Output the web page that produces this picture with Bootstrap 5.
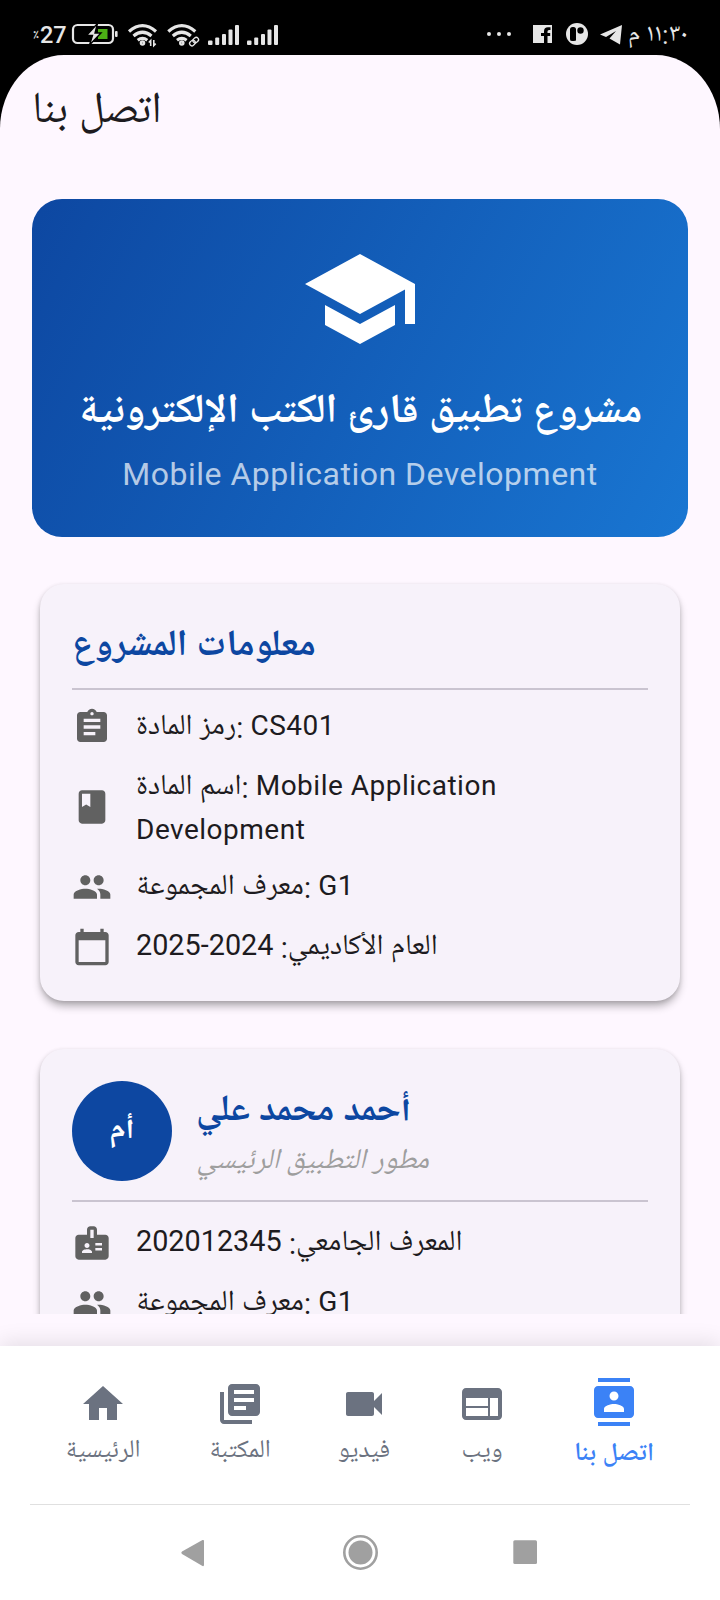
<!DOCTYPE html>
<html lang="ar" dir="ltr">
<head>
<meta charset="utf-8">
<meta name="viewport" content="width=device-width, initial-scale=1">
<title>اتصل بنا</title>
<link href="https://cdn.jsdelivr.net/npm/bootstrap@5.3.0/dist/css/bootstrap.min.css" rel="stylesheet">
<style>
  body { background: #000; font-family: Roboto, "Noto Naskh Arabic UI", sans-serif; color: #1d1b20; width: 720px; height: 1600px; overflow: hidden; }
  svg { display: block; flex: none; }
  .status { height: 55px; color: #e6e6e6; padding: 14px 32px 0 33px; }
  .status .pct { font-size: 15px; line-height: 42px; width: 7px; }
  .status .lvl { font-size: 23.500px; line-height: 42px; font-weight: 500; width: 27px; }
  .status .clock { font-size: 25px; line-height: 43px; height: 40px; }
  .screen { height: 1545px; background: #fef7ff; border-radius: 64px 64px 0 0 / 74px 74px 0 0; }
  .topbar { height: 112px; padding: 30px 32px 0; }
  .topbar h1 { font-size: 44px; line-height: 56px; font-weight: 400; }
  .content { height: 1147px; padding: 32px 32px 0; overflow: hidden; }
  .hero { height: 338px; border-radius: 30px; color: #fff; background: linear-gradient(117.3deg, #0d47a1, #1976d2); padding-top: 40px; }
  .hero h2 { font-size: 41.200px; line-height: 64px; font-weight: 700; margin: 23px 0 0; }
  .hero p { font-size: 32px; line-height: 48px; letter-spacing: .5px; color: rgba(255,255,255,.7); margin: 4px 0 0; }
  .panel { margin: 47px 8px 0; padding: 32px 32px 24px; background: #f7f2fa; border-radius: 24px; box-shadow: 0 6px 9px -1px rgba(0,0,0,.3), 0 1px 4px rgba(0,0,0,.12); }
  .panel + .panel { margin-top: 48px; }
  .panel h3 { font-size: 37.100px; line-height: 48px; font-weight: 700; color: #0d47a1; margin: 0; padding-top: 8px; }
  .rule { height: 2px; background: #cac4d0; }
  .info { padding: 8px 0; font-size: 28px; line-height: 44px; letter-spacing: .5px; gap: 24px; }
  .info svg { fill: #616161; }
  .info .txt { margin: -1px 0 1px; }
  .info .two { margin-bottom: -3px; }
  .ar { font-size: 29.200px; line-height: 1; vertical-align: -3px; }
  .num { font-size: 28.800px; line-height: 1; }
  .avatar { width: 100px; height: 100px; background: #0d47a1; color: #fff; font-size: 32px; line-height: 48px; font-weight: 700; }
  .role { font-size: 29px; line-height: 44px; font-style: italic; color: #9e9e9e; margin: 3px 0 -3px; }
  .tabs { height: 254px; margin-top: 32px; background: #fff; box-shadow: 0 -4px 20px rgba(0,0,0,.1); position: relative; }
  .tabrow { height: 158px; padding: 32px 40px 0; }
  .tab { color: #6b7280; font-size: 25.200px; line-height: 36px; white-space: nowrap; width: 0; padding-top: 2px; gap: 6px; }
  .tab svg { fill: currentColor; }
  .tab.active { color: #3b82f6; font-size: 26px; font-weight: 600; padding-top: 0; gap: 11px; }
  .syskeys { height: 96px; margin: 0 30px; border-top: 1px solid #e0e0e0; }
</style>
</head>
<body>
<header class="status d-flex align-items-start justify-content-between">
  <div class="d-flex">
    <span class="pct">٪</span><span class="lvl">27</span>
    <svg width="230" height="30" viewBox="67 20 230 30" style="margin-top:6px">
      <rect x="73" y="25" width="40" height="18" rx="4.500" fill="none" stroke="#e6e6e6" stroke-width="2.200"/>
      <rect x="115" y="31" width="2.600" height="6" rx="1" fill="#e6e6e6"/>
      <path d="M98 29h9.500v10H98z" fill="#4caf15"/>
      <path d="M97.500 23.500 86.500 35.500h6l-3 9.500 11.500-12h-6z" fill="#e6e6e6" stroke="#000" stroke-width="1.400"/>
      <g fill="none" stroke="#e6e6e6" stroke-width="3.200">
        <g id="wifi"><path d="M129 31.500q13.500-11.800 27 0M133.500 36q9-7.500 18 0M137.700 40.200q4.800-3.600 9.600 0"/><circle cx="142.500" cy="43" r="1.200"/></g>
        <use href="#wifi" x="39.300"/>
      </g>
      <path d="M150.500 46v-5M148.800 42.200l1.700-1.700M154 40v5.500l1.700-1.700" stroke="#000" stroke-width="4"/>
      <path d="M150.700 46v-5.500l-1.900 2M153.800 40v5.600l1.900-2" fill="none" stroke="#e6e6e6" stroke-width="1.600"/>
      <g fill="none" stroke-linecap="round"><path d="M190.500 44.500l7-6" stroke="#000" stroke-width="8"/>
      <g stroke="#e6e6e6" stroke-width="1.300" transform="rotate(-42 194 41.500)"><rect x="188.800" y="39.300" width="6" height="4.600" rx="2.300"/><rect x="193.200" y="39.300" width="6" height="4.600" rx="2.300"/></g></g>
      <g id="bars" fill="#e6e6e6"><rect x="208" y="40.500" width="4.500" height="4.500" rx="1"/><rect x="215.200" y="37.500" width="4" height="7.500" rx="1"/><rect x="222" y="34" width="4" height="11" rx="1"/><rect x="228.500" y="29.500" width="4" height="15.500" rx="1"/><rect x="235" y="25" width="4" height="20" rx="1"/></g>
      <use href="#bars" x="39"/>
    </svg>
  </div>
  <div class="d-flex">
    <svg width="142" height="30" viewBox="482 20 142 30" fill="#e6e6e6" style="margin-top:6px">
      <circle cx="489" cy="34" r="2"/><circle cx="499" cy="34" r="2"/><circle cx="509" cy="34" r="2"/>
      <path fill-rule="evenodd" d="M533 25h19v18h-4.500v-7h2.700v-3H547.500v-1.500q0-1.500 1.500-1.500h1.500v-2.800h-2.500q-4 0-4 4V33h-3v3h3v7H533z"/>
      <circle cx="577" cy="34" r="11"/><path d="M570.500 29.500q3-2 5.500 0v11h-5.500z" fill="#000"/><rect x="570" y="27" width="6" height="14" rx="2.500" fill="#000"/><circle cx="580.500" cy="30.500" r="3.200" fill="#000"/>
      <path d="M600 34.500 622 25l-2 19.500-10.500-6L616 31l-10 6z"/>
    </svg>
    <span class="clock ps-1">١١:٣٠ م</span>
  </div>
</header>

<div class="screen d-flex flex-column">
  <div class="topbar"><h1>اتصل بنا</h1></div>

  <main class="content">
    <section class="hero d-flex flex-column align-items-center text-center">
      <svg width="120" height="120" viewBox="0 0 24 24" fill="#fff"><path d="M5 13.180v4L12 21l7-3.820v-4L12 17l-7-3.820zM12 3 1 9l11 6 9-4.910V17h2V9L12 3z"/></svg>
      <h2>مشروع تطبيق قارئ الكتب الإلكترونية</h2>
      <p>Mobile Application Development</p>
    </section>

    <section class="panel">
      <h3>معلومات المشروع</h3>
      <div class="rule" style="margin:16px 0 7px"></div>
      <div class="info d-flex align-items-center">
        <svg width="40" height="40" viewBox="0 0 24 24"><path d="M19 3h-4.180C14.400 1.840 13.300 1 12 1s-2.400.84-2.820 2H5c-1.100 0-2 .9-2 2v14c0 1.100.9 2 2 2h14c1.100 0 2-.9 2-2V5c0-1.100-.9-2-2-2zm-7 0c.55 0 1 .45 1 1s-.45 1-1 1-1-.45-1-1 .45-1 1-1zm2 14H7v-2h7v2zm3-4H7v-2h10v2zm0-4H7V7h10v2z"/></svg>
        <div class="txt"><span class="ar">رمز المادة: </span>CS401</div>
      </div>
      <div class="info d-flex align-items-center">
        <svg width="40" height="40" viewBox="0 0 24 24"><path d="M18 2H6c-1.100 0-2 .9-2 2v16c0 1.100.9 2 2 2h12c1.100 0 2-.9 2-2V4c0-1.100-.9-2-2-2zM6 4h5v8l-2.500-1.500L6 12V4z"/></svg>
        <div class="txt two"><span class="ar">اسم المادة: </span>Mobile Application<br>Development</div>
      </div>
      <div class="info d-flex align-items-center">
        <svg width="40" height="40" viewBox="0 0 24 24"><path id="people" d="M16 11c1.660 0 2.990-1.340 2.990-3S17.660 5 16 5c-1.660 0-3 1.340-3 3s1.340 3 3 3zm-8 0c1.660 0 2.990-1.340 2.990-3S9.660 5 8 5C6.340 5 5 6.340 5 8s1.340 3 3 3zm0 2c-2.330 0-7 1.170-7 3.500V19h14v-2.500c0-2.330-4.670-3.500-7-3.500zm8 0c-.29 0-.62.020-.97.050 1.160.84 1.970 1.970 1.970 3.450V19h6v-2.500c0-2.330-4.670-3.500-7-3.500z"/></svg>
        <div class="txt"><span class="ar">معرف المجموعة: </span>G1</div>
      </div>
      <div class="info d-flex align-items-center">
        <svg width="40" height="40" viewBox="0 0 24 24"><path d="M20 3h-1V1h-2v2H7V1H5v2H4c-1.100 0-2 .9-2 2v16c0 1.100.9 2 2 2h16c1.100 0 2-.9 2-2V5c0-1.100-.9-2-2-2zm0 18H4V8h16v13z"/></svg>
        <div class="txt"><span class="ar">العام الأكاديمي: </span><span class="num">2024-2025</span></div>
      </div>
    </section>

    <section class="panel">
      <div class="d-flex align-items-center gap-4">
        <div class="avatar rounded-circle d-flex align-items-center justify-content-center">أم</div>
        <div><h3>أحمد محمد علي</h3><div class="role">مطور التطبيق الرئيسي</div></div>
      </div>
      <div class="rule" style="margin:19px 0 11px"></div>
      <div class="info d-flex align-items-center">
        <svg width="40" height="40" viewBox="0 0 24 24"><path fill-rule="evenodd" d="M20 7h-5V4c0-1.100-.9-2-2-2h-2c-1.100 0-2 .9-2 2v3H4c-1.100 0-2 .9-2 2v11c0 1.100.9 2 2 2h16c1.100 0 2-.9 2-2V9c0-1.100-.9-2-2-2zM9 12c.83 0 1.500.67 1.500 1.500S9.830 15 9 15s-1.500-.67-1.500-1.500S8.170 12 9 12zm3 6H6v-.75c0-1 2-1.500 3-1.500s3 .5 3 1.500V18zm1-9h-2V4h2v5zm5 7.500h-4V15h4v1.500zm0-3h-4V12h4v1.500z"/></svg>
        <div class="txt"><span class="ar">المعرف الجامعي: </span><span class="num">202012345</span></div>
      </div>
      <div class="info d-flex align-items-center">
        <svg width="40" height="40" viewBox="0 0 24 24"><use href="#people"/></svg>
        <div class="txt"><span class="ar">معرف المجموعة: </span>G1</div>
      </div>
    </section>
  </main>

  <footer class="tabs">
    <nav class="tabrow d-flex">
      <div class="tab d-flex flex-column align-items-center" style="margin-left:63px"><svg width="48" height="48" viewBox="0 0 24 24"><path d="M10 20v-6h4v6h5v-8h3L12 3 2 12h3v8z"/></svg><span>الرئيسية</span></div>
      <div class="tab d-flex flex-column align-items-center" style="margin-left:137px"><svg width="48" height="48" viewBox="0 0 24 24"><path d="M4 6H2v14c0 1.100.9 2 2 2h14v-2H4V6zm16-4H8c-1.100 0-2 .9-2 2v12c0 1.100.9 2 2 2h12c1.100 0 2-.9 2-2V4c0-1.100-.9-2-2-2zm-1 9H9V9h10v2zm-4 4H9v-2h6v2zm4-8H9V5h10v2z"/></svg><span>المكتبة</span></div>
      <div class="tab d-flex flex-column align-items-center" style="margin-left:124px"><svg width="48" height="48" viewBox="0 0 24 24"><path d="M17 10.500V7c0-.55-.45-1-1-1H4c-.55 0-1 .45-1 1v10c0 .55.45 1 1 1h12c.55 0 1-.45 1-1v-3.500l4 4v-11l-4 4z"/></svg><span>فيديو</span></div>
      <div class="tab d-flex flex-column align-items-center" style="margin-left:118px"><svg width="48" height="48" viewBox="0 0 24 24"><path d="M20 4H4c-1.100 0-1.990.9-1.990 2L2 18c0 1.100.9 2 2 2h16c1.100 0 2-.9 2-2V6c0-1.100-.9-2-2-2zm-5 14H4v-4h11v4zm0-5H4V9h11v4zm5 5h-4V9h4v9z"/></svg><span>ويب</span></div>
      <div class="tab active d-flex flex-column align-items-center" style="margin-left:132px"><svg width="48" height="48" viewBox="0 0 24 24"><path d="M20 0H4v2h16V0zM4 24h16v-2H4v2zM20 4H4c-1.100 0-2 .9-2 2v12c0 1.100.9 2 2 2h16c1.100 0 2-.9 2-2V6c0-1.100-.9-2-2-2zm-8 2.750c1.240 0 2.250 1.010 2.250 2.250s-1.010 2.250-2.250 2.250S9.750 10.240 9.750 9 10.760 6.750 12 6.750zM17 17H7v-1.500c0-1.670 3.330-2.500 5-2.500s5 .83 5 2.500V17z"/></svg><span>اتصل بنا</span></div>
    </nav>
    <div class="syskeys">
      <svg width="660" height="95" viewBox="30 1505 660 95" fill="#a0a0a0">
        <path d="M182 1551.500 202.500 1540q1.500-.5 1.500 1v24q0 1.500-1.500 1L182 1554q-1.500-1.300 0-2.500z"/>
        <circle cx="360.500" cy="1552.500" r="12"/><circle cx="360.500" cy="1552.500" r="16.200" fill="none" stroke="#a0a0a0" stroke-width="2.600"/>
        <rect x="513.300" y="1540.300" width="23.700" height="23.700" rx="1.500"/>
      </svg>
    </div>
  </footer>
</div>
<script src="https://cdn.jsdelivr.net/npm/bootstrap@5.3.0/dist/js/bootstrap.bundle.min.js"></script>
</body>
</html>
